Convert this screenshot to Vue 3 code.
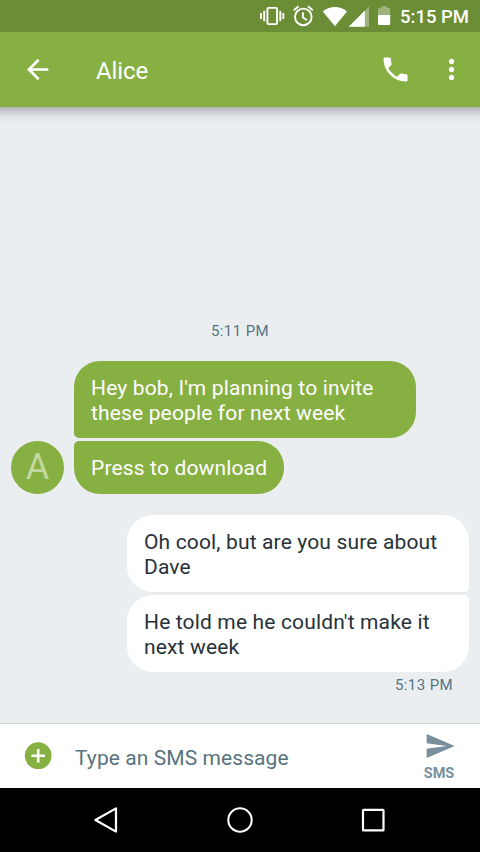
<script setup>
const received = ["Hey bob, I'm planning to invite these people for next week", 'Press to download']
const sent = ['Oh cool, but are you sure about Dave', "He told me he couldn't make it next week"]
</script>

<template>
  <div class="screen">
    <div class="status">
      <svg class="vibrate" width="26" height="32" viewBox="259 0 26 32">
        <rect x="267.400" y="7.900" width="9.600" height="16.200" rx="1" fill="none" stroke="#fff" stroke-width="1.900" />
        <path d="M264.200 10.700v10.600M280.300 10.700v10.600M261 13v6M283.300 13v6" stroke="#fff" stroke-width="1.900" />
      </svg>
      <svg class="alarm" width="22" height="32" viewBox="292 0 22 32">
        <g fill="none" stroke="#fff" stroke-width="1.900">
          <circle cx="303.300" cy="16.900" r="8.300" />
          <path d="M302.900 12.200v5.300l4 2.500M293.800 10.300l4.800-4M312.800 10.300l-4.800-4" />
        </g>
      </svg>
      <svg class="wifi" width="26" height="32" viewBox="322 0 26 32">
        <path d="M334.900 26.200 322.800 11.400C326.200 8.800 330.300 7 334.900 7s8.900 1.800 12.100 4.400z" fill="#fff" />
      </svg>
      <svg class="signal" width="22" height="32" viewBox="348 0 22 32">
        <path d="M369 6.400V26.800H348.700z" fill="#fff" opacity=".35" />
        <path d="M364.900 10.500v16.300H348.700z" fill="#fff" />
      </svg>
      <svg class="battery" width="14" height="32" viewBox="377 0 14 32">
        <path d="M378 15V9q0-1 1-1h2.300V6.200h5.700V8h2.200q1 0 1 1v6z" fill="#fff" opacity=".35" />
        <path d="M378 14.900h12.200V24q0 1-1 1H379q-1 0-1-1z" fill="#fff" />
      </svg>
      <span class="clock">5:15 PM</span>
    </div>

    <header class="appbar">
      <svg class="back" width="32" height="32" viewBox="0.250 -0.400 24 24">
        <path d="M20 11H7.830l5.590-5.590L12 4l-8 8 8 8 1.410-1.410L7.830 13H20v-2z" fill="#fff" />
      </svg>
      <h1 class="title">Alice</h1>
      <svg class="call" width="32" height="32" viewBox="-0.400 -0.400 24 24">
        <path d="M6.620 10.790c1.440 2.830 3.760 5.140 6.590 6.590l2.200-2.200c.27-.27.67-.36 1.020-.24 1.120.37 2.330.57 3.570.57.55 0 1 .45 1 1V20c0 .55-.45 1-1 1-9.390 0-17-7.610-17-17 0-.55.45-1 1-1h3.500c.55 0 1 .45 1 1 0 1.250.2 2.450.57 3.570.11.35.03.74-.25 1.020l-2.200 2.200z" fill="#fff" />
      </svg>
      <svg class="more" width="32" height="32" viewBox="-0.400 -0.400 24 24">
        <path d="M12 8c1.100 0 2-.9 2-2s-.9-2-2-2-2 .9-2 2 .9 2 2 2zm0 2c-1.100 0-2 .9-2 2s.9 2 2 2 2-.9 2-2-.9-2-2-2zm0 6c-1.100 0-2 .9-2 2s.9 2 2 2 2-.9 2-2-.9-2-2-2z" fill="#fff" />
      </svg>
    </header>

    <main class="thread">
      <time class="day">5:11 PM</time>
      <section class="incoming">
        <div class="avatar"><span>A</span></div>
        <div class="stack">
          <p v-for="m in received" :key="m" class="bubble">{{ m }}</p>
        </div>
      </section>
      <section class="outgoing">
        <p v-for="m in sent" :key="m" class="bubble">{{ m }}</p>
      </section>
      <time class="sent-at">5:13 PM</time>
    </main>

    <footer class="composer">
      <svg class="add" width="28" height="28" viewBox="0 0 28 28">
        <circle cx="14.200" cy="13.700" r="13.400" fill="#87b043" />
        <path d="M14.200 6.900v13.600M7.400 13.700h13.600" stroke="#fff" stroke-width="2.600" />
      </svg>
      <span class="hint">Type an SMS message</span>
      <div class="send">
        <svg width="32" height="32" viewBox="0 0 24 24">
          <path d="M2.010 21 23 12 2.010 3 2 10l15 2-15 2z" fill="#78909c" />
        </svg>
        <span class="send-label">SMS</span>
      </div>
    </footer>

    <nav class="navbar">
      <svg width="28" height="28" viewBox="0 0 28 28">
        <path d="M24 2.400v23.200L3.400 14z" fill="none" stroke="#fff" stroke-width="2.200" stroke-linejoin="round" />
      </svg>
      <svg width="28" height="28" viewBox="0 0 28 28">
        <circle cx="14" cy="14" r="11.700" fill="none" stroke="#fff" stroke-width="2" />
      </svg>
      <svg width="28" height="28" viewBox="0 0 28 28">
        <rect x="4" y="3.900" width="20.500" height="20.500" rx=".5" fill="none" stroke="#fff" stroke-width="2.200" />
      </svg>
    </nav>
  </div>
</template>

<style>
body {
  margin: 0;
}
</style>

<style scoped>
.screen {
  width: 480px;
  height: 852px;
  display: flex;
  flex-direction: column;
  overflow: hidden;
  background: #ebeef1;
  font-family: Roboto, sans-serif;
}
svg {
  display: block;
  flex: none;
}
.status {
  flex: none;
  height: 32px;
  display: flex;
  background: #6b8d36;
  color: #fff;
}
.vibrate {
  margin-left: 259px;
}
.alarm {
  margin-left: 7px;
}
.wifi {
  margin-left: 8px;
}
.battery {
  margin-left: 7px;
}
.clock {
  margin-left: 9px;
  font-size: 18.500px;
  font-weight: 500;
  line-height: 34px;
  white-space: nowrap;
}
.appbar {
  flex: none;
  height: 75px;
  display: flex;
  box-sizing: border-box;
  padding: 21px 13px 0 22px;
  background: #87b043;
  color: #fff;
}
.title {
  margin: 0 auto 0 42px;
  font-size: 24px;
  font-weight: 400;
  line-height: 36px;
  letter-spacing: -0.100px;
}
.more {
  margin-left: 24px;
}
.thread {
  flex: 1;
  min-height: 0;
  display: flex;
  flex-direction: column;
  justify-content: flex-end;
  box-sizing: border-box;
  padding: 0 11px 29px;
  background: linear-gradient(rgba(0, 0, 0, 0.24), rgba(0, 0, 0, 0.13) 5px, rgba(0, 0, 0, 0.04) 10px, transparent 16px);
}
.day,
.sent-at {
  font-size: 15px;
  line-height: 18px;
  letter-spacing: 0.400px;
  color: #587380;
}
.day {
  align-self: center;
  margin-bottom: 21px;
}
.sent-at {
  align-self: flex-end;
  margin: 4px 16px 0 0;
}
.incoming {
  display: flex;
  align-items: flex-end;
  gap: 10px;
}
.avatar {
  width: 53px;
  height: 53px;
  border-radius: 50%;
  background: #87b043;
  color: #c3d8a1;
  font-size: 36px;
  line-height: 53px;
  text-align: center;
}
.stack,
.outgoing {
  display: flex;
  flex-direction: column;
  align-items: flex-start;
  gap: 3px;
}
.outgoing {
  align-items: flex-end;
  margin-top: 21px;
}
.bubble {
  margin: 0;
  box-sizing: border-box;
  min-height: 53px;
  max-width: 342px;
  padding: 15px 17px 12px;
  border-radius: 26px;
  font-size: 21px;
  line-height: 25px;
  letter-spacing: 0.150px;
}
.stack .bubble {
  background: #87b043;
  color: #fff;
}
.stack .bubble:first-child {
  border-bottom-left-radius: 5px;
}
.stack .bubble:last-child {
  border-top-left-radius: 5px;
}
.outgoing .bubble {
  width: 342px;
  background: #fff;
  color: #263238;
}
.outgoing .bubble:first-child {
  border-bottom-right-radius: 5px;
}
.outgoing .bubble:last-child {
  border-top-right-radius: 5px;
}
.composer {
  flex: none;
  height: 65px;
  box-sizing: border-box;
  display: flex;
  align-items: flex-start;
  padding: 0 25px 0 24px;
  border-top: 1px solid #cfd8dc;
  background: #fff;
}
.add {
  margin-top: 18px;
}
.hint {
  margin: 21px auto 0 23px;
  font-size: 21px;
  line-height: 26px;
  letter-spacing: 0.080px;
  color: #587380;
}
.send {
  display: flex;
  flex-direction: column;
  align-items: center;
  padding-top: 6px;
}
.send svg {
  margin: 0 -1px 0 1px;
}
.send-label {
  margin-top: 4px;
  font-size: 14.500px;
  font-weight: 700;
  line-height: 16px;
  color: #78909c;
}
.navbar {
  flex: none;
  height: 64px;
  display: flex;
  align-items: center;
  justify-content: space-between;
  box-sizing: border-box;
  padding: 0 93px 0 92px;
  background: #000;
}
</style>
